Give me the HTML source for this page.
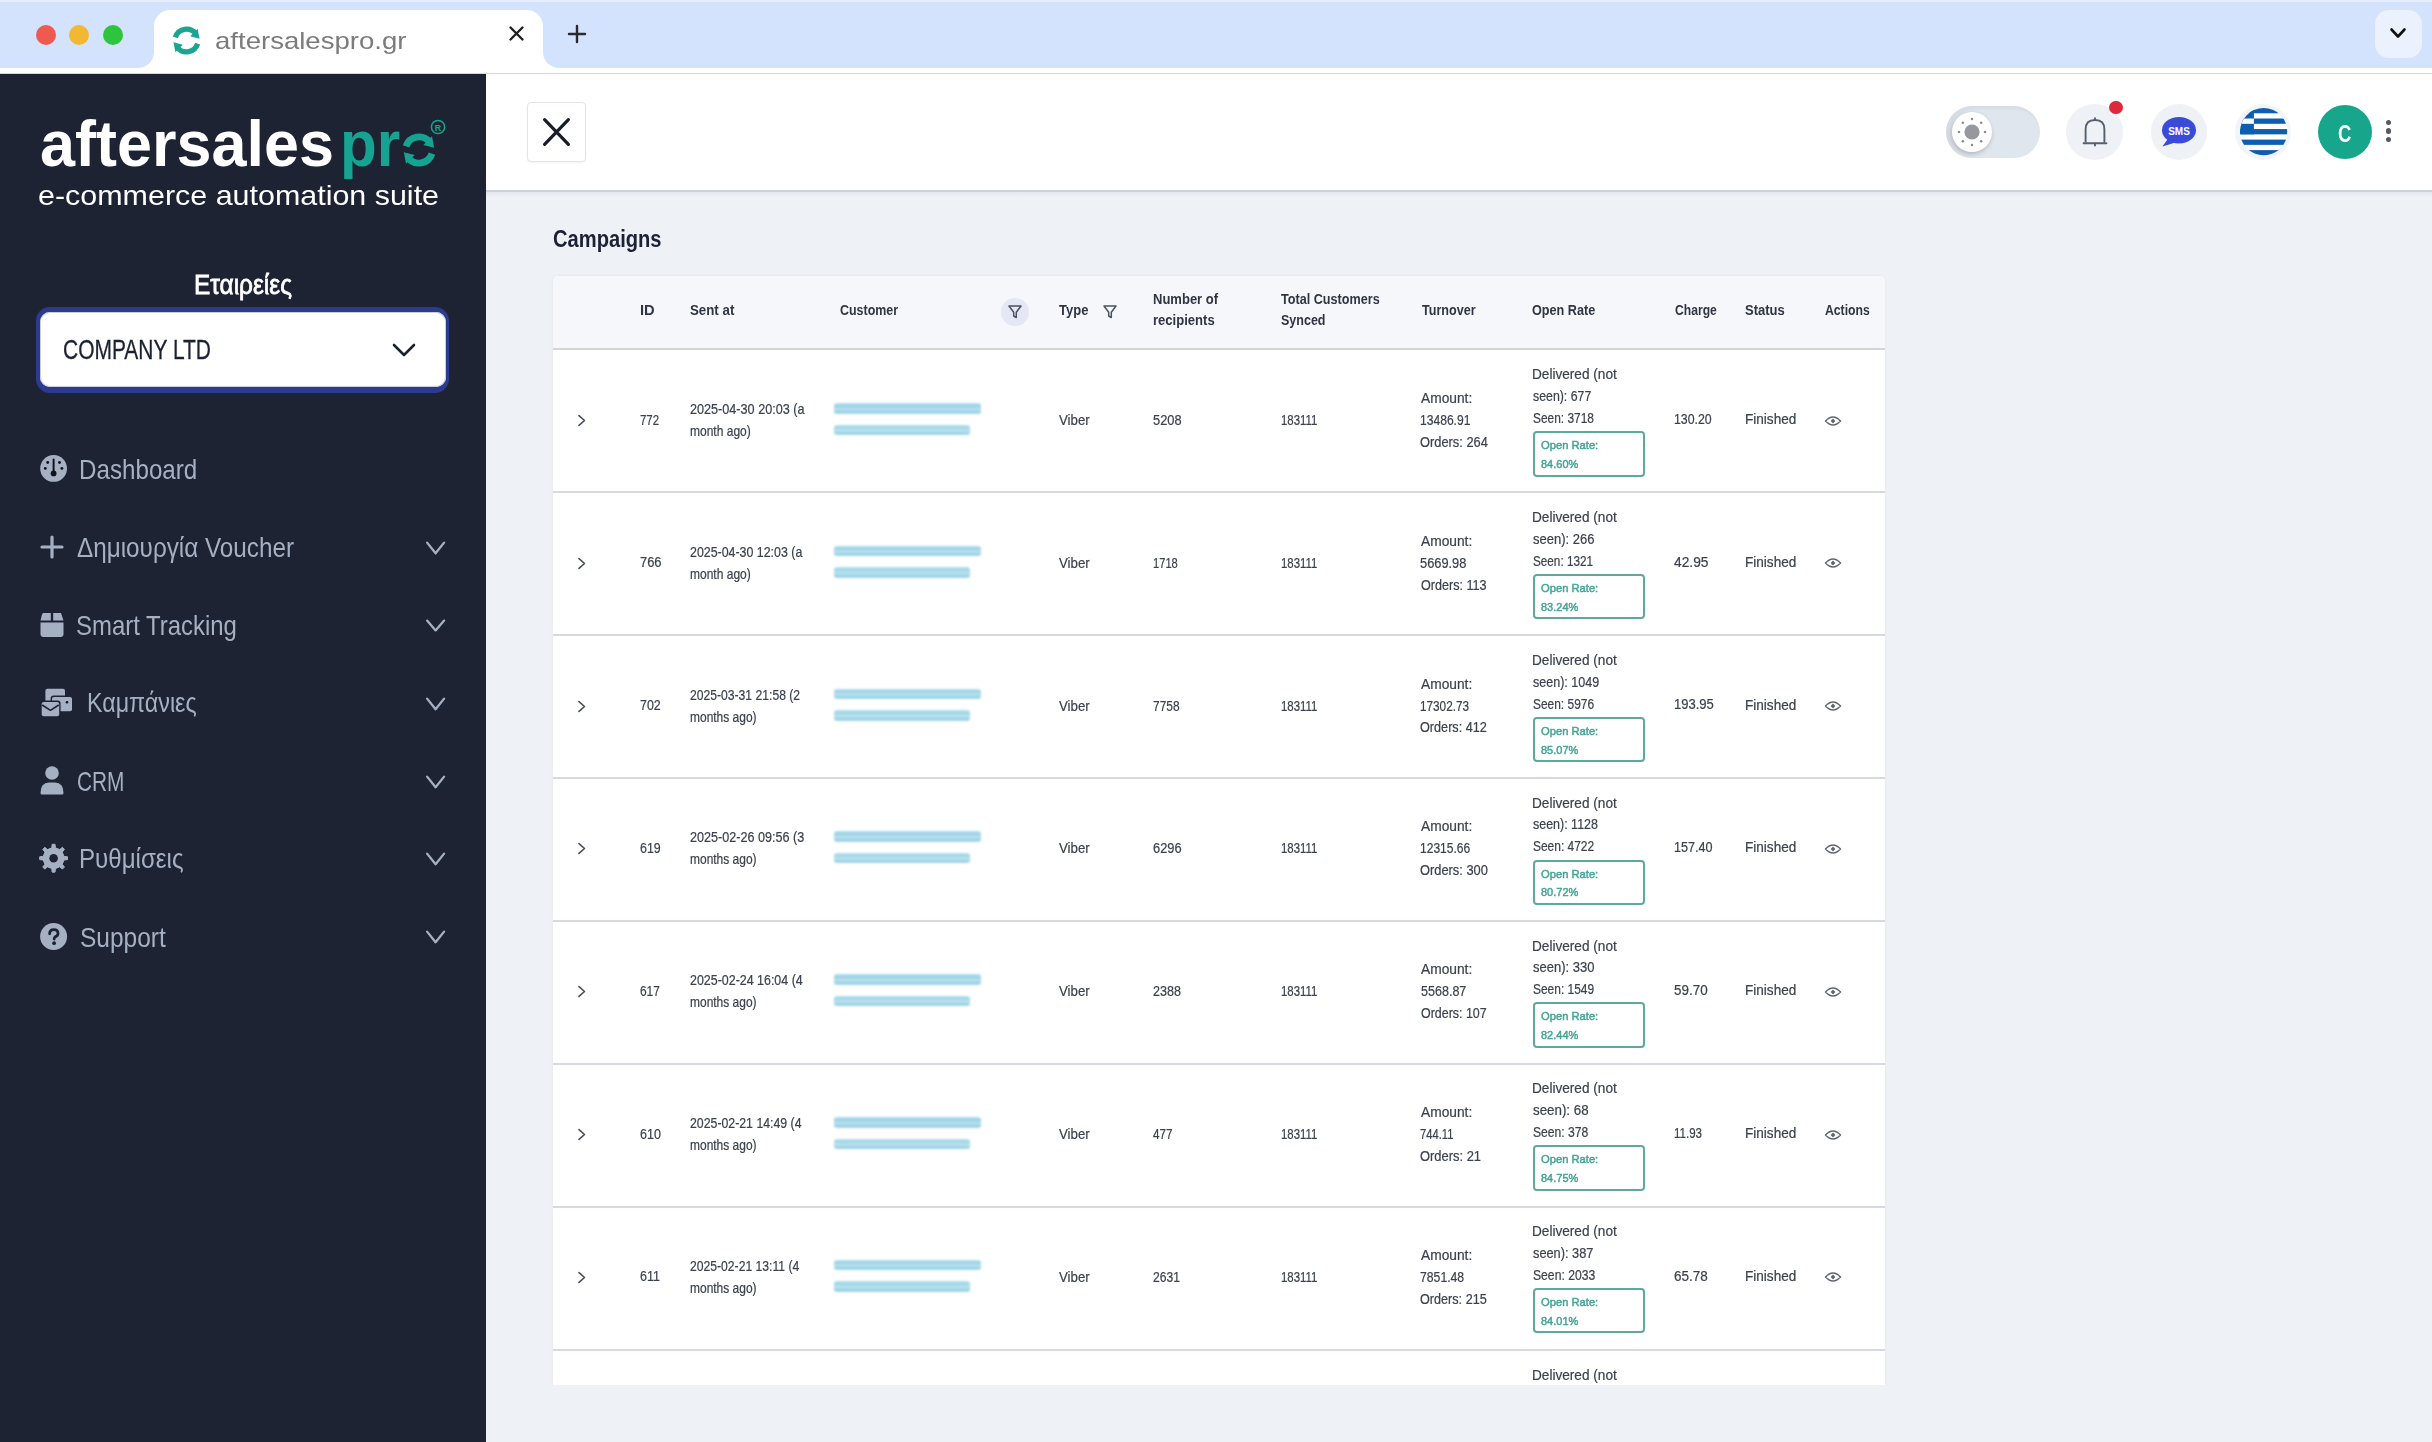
<!DOCTYPE html>
<html><head><meta charset="utf-8">
<style>
html,body{margin:0;padding:0;}
body{width:2432px;height:1442px;position:relative;overflow:hidden;background:#eef2f7;font-family:'Liberation Sans',sans-serif;}
.a{position:absolute;}
.t{position:absolute;white-space:pre;transform-origin:0 0;}
svg{position:absolute;overflow:visible;}
</style></head><body>
<div class=a style="left:0px;top:0px;width:2432px;height:68px;background:#d3e3fd;"></div>
<div class=a style="left:0px;top:0px;width:2432px;height:2px;background:#e6edfb;"></div>
<div class=a style="left:0px;top:68px;width:2432px;height:5px;background:#ffffff;"></div>
<div class=a style="left:0px;top:73px;width:2432px;height:1px;background:#d5d7db;"></div>
<div class=a style="left:35.5px;top:24.5px;width:20px;height:20px;border-radius:50%;background:#ee5a50;"></div>
<div class=a style="left:68.75px;top:24.5px;width:20px;height:20px;border-radius:50%;background:#f4b731;"></div>
<div class=a style="left:102.5px;top:24.5px;width:20px;height:20px;border-radius:50%;background:#2ec43e;"></div>
<div class=a style="left:154px;top:10px;width:389px;height:58px;background:#ffffff;border-radius:16px 16px 0 0;"></div>
<div class=a style="left:138px;top:52px;width:16px;height:16px;background:#ffffff;"></div>
<div class=a style="left:138px;top:52px;width:16px;height:16px;background:#d3e3fd;border-radius:0 0 16px 0;"></div>
<div class=a style="left:543px;top:52px;width:16px;height:16px;background:#ffffff;"></div>
<div class=a style="left:543px;top:52px;width:16px;height:16px;background:#d3e3fd;border-radius:0 0 0 16px;"></div>
<svg style="left:171px;top:25px" width="31" height="31" viewBox="0 0 100 100"><path d="M14 40 A38 38 0 0 1 80 28" fill="none" stroke="#1aa591" stroke-width="17.0"/><path d="M86 12 L92 44 L62 36 Z" fill="#1aa591"/><path d="M86 60 A38 38 0 0 1 20 72" fill="none" stroke="#1aa591" stroke-width="17.0"/><path d="M14 88 L8 56 L38 64 Z" fill="#1aa591"/></svg>
<svg style="left:509px;top:26px" width="15" height="15" viewBox="0 0 15 15"><path d="M1.5 1.5 L13.5 13.5 M13.5 1.5 L1.5 13.5" stroke="#1f1f1f" stroke-width="2.4" stroke-linecap="round"/></svg>
<svg style="left:568px;top:25px" width="18" height="18" viewBox="0 0 18 18"><path d="M9 1 V17 M1 9 H17" stroke="#2a2a2a" stroke-width="2.4" stroke-linecap="round"/></svg>
<div class=a style="left:2375px;top:9.5px;width:47px;height:48px;background:#ebf1fd;border-radius:14px;"></div>
<svg style="left:2390px;top:28px" width="16" height="11" viewBox="0 0 16 11"><path d="M1.5 1.5 L8 8.5 L14.5 1.5" fill="none" stroke="#111" stroke-width="2.6" stroke-linecap="round" stroke-linejoin="round"/></svg>
<div class=a style="left:0px;top:74px;width:486px;height:1368px;background:#1e2333;"></div>
<svg style="left:401px;top:132px" width="36" height="36" viewBox="0 0 100 100"><path d="M14 40 A38 38 0 0 1 80 28" fill="none" stroke="#16a391" stroke-width="19.0"/><path d="M86 12 L92 44 L62 36 Z" fill="#16a391"/><path d="M86 60 A38 38 0 0 1 20 72" fill="none" stroke="#16a391" stroke-width="19.0"/><path d="M14 88 L8 56 L38 64 Z" fill="#16a391"/></svg>
<svg style="left:430px;top:119px" width="16" height="16" viewBox="0 0 16 16"><circle cx="8" cy="8" r="6.6" fill="none" stroke="#16a391" stroke-width="1.5"/><text x="8" y="11.5" text-anchor="middle" font-size="9" font-family="Liberation Sans" font-weight="700" fill="#16a391">R</text></svg>
<div class=a style="left:35.5px;top:306.6px;width:413.8px;height:86.4px;background:#2d3b8f;border-radius:14px;"></div>
<div class=a style="left:40.4px;top:311.8px;width:405.2px;height:75.4px;background:#ffffff;border-radius:10px;box-shadow:inset 0 0 0 1px #c9cde0;"></div>
<svg style="left:392px;top:343px" width="24" height="14" viewBox="0 0 24 14"><path d="M2 2 L12 12 L22 2" fill="none" stroke="#1b2133" stroke-width="2.6" stroke-linecap="round" stroke-linejoin="round"/></svg>
<svg style="left:40px;top:455px" width="28" height="28" viewBox="0 0 28 28"><circle cx="13.6" cy="13.4" r="13.4" fill="#a6b0c3"/><circle cx="7.7" cy="7.5" r="1.45" fill="#10141f"/><circle cx="19.5" cy="7.5" r="1.45" fill="#10141f"/><circle cx="5.3" cy="13.4" r="1.45" fill="#10141f"/><circle cx="21.9" cy="13.4" r="1.45" fill="#10141f"/><path d="M13.6 4.6 V17" stroke="#10141f" stroke-width="2" stroke-linecap="round"/><circle cx="13.6" cy="18.4" r="2.9" fill="#10141f"/></svg>
<svg style="left:40px;top:535px" width="24" height="24" viewBox="0 0 24 24"><path d="M12 2 V22 M2 12 H22" stroke="#a6b0c3" stroke-width="3.2" stroke-linecap="round"/></svg>
<svg style="left:424px;top:539.8px" width="24" height="15.900000000000091" viewBox="0 0 24 15.900000000000091"><path d="M3.1 2.6 L11.6 13.300000000000091 L20.1 2.6" fill="none" stroke="#a6b0c3" stroke-width="2.3" stroke-linecap="round" stroke-linejoin="round"/></svg>
<svg style="left:40px;top:612px" width="24" height="26" viewBox="0 0 24 26"><path d="M3 1 H10.8 V8.5 H0.5 L2 2.5 Z M13.2 1 H21 L23.5 8.5 H13.2 Z" fill="#a6b0c3"/><path d="M0.5 10.5 H23.5 V22 Q23.5 25 20.5 25 H3.5 Q0.5 25 0.5 22 Z" fill="#a6b0c3"/></svg>
<svg style="left:424px;top:618px" width="24" height="15" viewBox="0 0 24 15"><path d="M3.1 2.6 L11.6 12.4 L20.1 2.6" fill="none" stroke="#a6b0c3" stroke-width="2.3" stroke-linecap="round" stroke-linejoin="round"/></svg>
<svg style="left:41px;top:688px" width="32" height="30" viewBox="0 0 32 30"><rect x="4.4" y="0.7" width="19.6" height="15" rx="2" fill="#a6b0c3"/><rect x="9.6" y="7.6" width="22.8" height="17" rx="3" fill="#1e2333"/><rect x="11" y="9" width="20" height="14.2" rx="2" fill="#a6b0c3"/><circle cx="26" cy="14.3" r="1.3" fill="#10141f"/><rect x="-0.7" y="12.6" width="20.3" height="17" rx="3" fill="#1e2333"/><rect x="0.7" y="14" width="17.5" height="14.2" rx="2" fill="#a6b0c3"/><path d="M1.2 17 L9.45 22.3 L17.7 17" fill="none" stroke="#1e2333" stroke-width="1.6" stroke-linejoin="round"/></svg>
<svg style="left:424px;top:695.7px" width="24" height="15.799999999999955" viewBox="0 0 24 15.799999999999955"><path d="M3.1 2.6 L11.6 13.199999999999955 L20.1 2.6" fill="none" stroke="#a6b0c3" stroke-width="2.3" stroke-linecap="round" stroke-linejoin="round"/></svg>
<svg style="left:40px;top:766px" width="24" height="29" viewBox="0 0 24 29"><circle cx="12" cy="7" r="6.8" fill="#a6b0c3"/><path d="M0.5 27 Q0.5 16.5 9 16.5 H15 Q23.5 16.5 23.5 27 Q23.5 28.5 22 28.5 H2 Q0.5 28.5 0.5 27 Z" fill="#a6b0c3"/></svg>
<svg style="left:424px;top:773.6px" width="24" height="15.799999999999955" viewBox="0 0 24 15.799999999999955"><path d="M3.1 2.6 L11.6 13.199999999999955 L20.1 2.6" fill="none" stroke="#a6b0c3" stroke-width="2.3" stroke-linecap="round" stroke-linejoin="round"/></svg>
<svg style="left:40px;top:844px" width="28" height="29" viewBox="0 0 28 29"><path d="M23.94 12.39 L27.53 12.77 L27.53 15.63 L23.94 16.01 L22.19 20.24 L24.46 23.04 L22.44 25.06 L19.64 22.79 L15.41 24.54 L15.03 28.13 L12.17 28.13 L11.79 24.54 L7.56 22.79 L4.76 25.06 L2.74 23.04 L5.01 20.24 L3.26 16.01 L-0.33 15.63 L-0.33 12.77 L3.26 12.39 L5.01 8.16 L2.74 5.36 L4.76 3.34 L7.56 5.61 L11.79 3.86 L12.17 0.27 L15.03 0.27 L15.41 3.86 L19.64 5.61 L22.44 3.34 L24.46 5.36 L22.19 8.16 Z" fill="#a6b0c3" stroke="#a6b0c3" stroke-width="1" stroke-linejoin="round"/><circle cx="13.6" cy="14.2" r="10.5" fill="#a6b0c3"/><circle cx="13.6" cy="14.2" r="4.3" fill="#1e2333"/></svg>
<svg style="left:424px;top:851.4px" width="24" height="15.800000000000068" viewBox="0 0 24 15.800000000000068"><path d="M3.1 2.6 L11.6 13.200000000000069 L20.1 2.6" fill="none" stroke="#a6b0c3" stroke-width="2.3" stroke-linecap="round" stroke-linejoin="round"/></svg>
<svg style="left:40px;top:923px" width="28" height="28" viewBox="0 0 28 28"><circle cx="13.6" cy="13.5" r="13.5" fill="#a6b0c3"/><path d="M9.6 10.8 Q9.6 6.6 13.8 6.6 Q18 6.6 18 10.4 Q18 12.6 15.6 13.6 Q14.2 14.3 14.2 16" fill="none" stroke="#1e2333" stroke-width="2.8" stroke-linecap="round"/><circle cx="14.1" cy="20.2" r="1.9" fill="#1e2333"/></svg>
<svg style="left:424px;top:929.2px" width="24" height="15.799999999999955" viewBox="0 0 24 15.799999999999955"><path d="M3.1 2.6 L11.6 13.199999999999955 L20.1 2.6" fill="none" stroke="#a6b0c3" stroke-width="2.3" stroke-linecap="round" stroke-linejoin="round"/></svg>
<div class=a style="left:486px;top:192px;width:1946px;height:5px;background:linear-gradient(to bottom,#e3e7ee,#eef2f7);"></div>
<div class=a style="left:486px;top:74px;width:1946px;height:116px;background:#ffffff;"></div>
<div class=a style="left:486px;top:190px;width:1946px;height:2px;background:#ccd1da;"></div>
<div class=a style="left:527px;top:102px;width:59px;height:60px;background:#ffffff;box-sizing:border-box;border:1px solid #e2e5ea;border-radius:4px;box-shadow:0 1px 2px rgba(0,0,0,0.05);"></div>
<svg style="left:541px;top:116px" width="31" height="32" viewBox="0 0 31 32"><path d="M3.6 3.6 L27.4 28.4 M27.4 3.6 L3.6 28.4" stroke="#171c2b" stroke-width="3.2" stroke-linecap="round"/></svg>
<div class=a style="left:1946px;top:106px;width:94px;height:51.5px;background:#e0e6ee;border-radius:26px;box-shadow:inset 2px 2px 4px rgba(0,0,0,0.06);"></div>
<div class=a style="left:1952px;top:112px;width:40px;height:40px;border-radius:50%;background:#ffffff;box-shadow:-1px 2px 5px rgba(0,0,0,0.22);"></div>
<svg style="left:1958px;top:118px" width="28" height="28" viewBox="0 0 28 28"><circle cx="14" cy="14" r="7.6" fill="#97989d"/><circle cx="27.00" cy="14.00" r="1.25" fill="#8a8b90"/><circle cx="23.19" cy="23.19" r="1.25" fill="#8a8b90"/><circle cx="14.00" cy="27.00" r="1.25" fill="#8a8b90"/><circle cx="4.81" cy="23.19" r="1.25" fill="#8a8b90"/><circle cx="1.00" cy="14.00" r="1.25" fill="#8a8b90"/><circle cx="4.81" cy="4.81" r="1.25" fill="#8a8b90"/><circle cx="14.00" cy="1.00" r="1.25" fill="#8a8b90"/><circle cx="23.19" cy="4.81" r="1.25" fill="#8a8b90"/></svg>
<div class=a style="left:2066.2999999999997px;top:103.6px;width:56.8px;height:56.8px;border-radius:50%;background:#eef1f6;"></div>
<svg style="left:2081px;top:115px" width="28" height="34" viewBox="0 0 28 34"><path d="M4.6 27.6 V14.5 Q4.6 5 14 5 Q23.4 5 23.4 14.5 V27.6" fill="none" stroke="#56606c" stroke-width="1.9" stroke-linejoin="round"/><path d="M2.6 28.3 H25.4" stroke="#56606c" stroke-width="2" stroke-linecap="round"/><path d="M14 3.2 V5 M14 28.5 V30.6" stroke="#56606c" stroke-width="1.9" stroke-linecap="round"/></svg>
<div class=a style="left:2109.4px;top:101.0px;width:13.2px;height:13.2px;border-radius:50%;background:#e0283c;"></div>
<div class=a style="left:2150.6px;top:103.6px;width:56.8px;height:56.8px;border-radius:50%;background:#eef1f6;"></div>
<svg style="left:2160px;top:115px" width="38" height="34" viewBox="0 0 38 34"><ellipse cx="19" cy="15.2" rx="17" ry="13.2" fill="#3a4bd9"/><path d="M8.5 23 L2.4 31.6 L17 27 Z" fill="#3a4bd9"/><text x="8.2" y="20.1" textLength="21.6" lengthAdjust="spacingAndGlyphs" font-family="Liberation Sans" font-weight="700" font-size="11.2" fill="#ffffff">SMS</text></svg>
<div class=a style="left:2234.8px;top:103.8px;width:56.4px;height:56.4px;border-radius:50%;background:#f1f4f9;"></div>
<svg style="left:2239.5px;top:108.10000000000001px" width="47.4" height="47.4" viewBox="0 0 47.4 47.4"><defs><clipPath id="fc"><circle cx="23.7" cy="23.7" r="23.7"/></clipPath></defs><g clip-path="url(#fc)"><rect x="0" y="0" width="47.4" height="47.4" fill="#ffffff"/><rect x="0" y="0.00" width="47.4" height="5.27" fill="#0d5eaf"/><rect x="0" y="10.53" width="47.4" height="5.27" fill="#0d5eaf"/><rect x="0" y="21.07" width="47.4" height="5.27" fill="#0d5eaf"/><rect x="0" y="31.60" width="47.4" height="5.27" fill="#0d5eaf"/><rect x="0" y="42.13" width="47.4" height="5.27" fill="#0d5eaf"/><rect x="0" y="0" width="13.9" height="26.33" fill="#0d5eaf"/><rect x="0" y="10.53" width="13.9" height="5.27" fill="#fff"/></g></svg>
<div class=a style="left:2317.5px;top:104.7px;width:54.6px;height:54.6px;border-radius:50%;background:#17a58c;"></div>
<div class=a style="left:2385.5px;top:119.6px;width:5.8px;height:5.8px;border-radius:50%;background:#535a66;"></div>
<div class=a style="left:2385.5px;top:128.4px;width:5.8px;height:5.8px;border-radius:50%;background:#535a66;"></div>
<div class=a style="left:2385.5px;top:136.7px;width:5.8px;height:5.8px;border-radius:50%;background:#535a66;"></div>
<div class=a style="left:553px;top:276px;width:1332px;height:1109px;background:#ffffff;border-radius:5px 5px 0 0;box-shadow:0 0 3px rgba(40,50,70,0.07);"></div>
<div class=a style="left:553px;top:276px;width:1332px;height:72px;background:#f5f7fa;border-radius:5px 5px 0 0;"></div>
<div class=a style="left:553px;top:348px;width:1332px;height:2px;background:#d0d4db;"></div>
<div class=a style="left:1001px;top:298px;width:28px;height:28px;border-radius:50%;background:#e4e7f4;"></div>
<svg style="left:1008px;top:305px" width="14" height="14" viewBox="0 0 14 14"><path d="M1 1 H13 L8.3 7.2 V12.5 L5.7 11 V7.2 Z" fill="none" stroke="#4b5263" stroke-width="1.5" stroke-linejoin="round"/></svg>
<svg style="left:1102.5px;top:305px" width="14" height="14" viewBox="0 0 14 14"><path d="M1 1 H13 L8.3 7.2 V12.5 L5.7 11 V7.2 Z" fill="none" stroke="#4b5263" stroke-width="1.5" stroke-linejoin="round"/></svg>
<svg style="left:576px;top:413.0px" width="11" height="15" viewBox="0 0 11 15"><path d="M3 2.6 L8.5 7.5 L3 12.4" fill="none" stroke="#474d5a" stroke-width="1.6" stroke-linecap="round" stroke-linejoin="round"/></svg>
<div class=a style="left:834px;top:403.0px;width:147px;height:10.5px;background:linear-gradient(to bottom,#b4dfee 0,#9ad2e5 30%,#bde3ef 55%,#94cfe3 85%,#b2dcea 100%);border-radius:3px;filter:blur(1.1px);"></div>
<div class=a style="left:834px;top:424.5px;width:136px;height:10.5px;background:linear-gradient(to bottom,#b6e0ee 0,#a0d5e7 30%,#bfe4f0 55%,#94cfe3 85%,#b2dcea 100%);border-radius:3px;filter:blur(1.1px);"></div>
<div class=a style="left:1532.5px;top:431.1px;width:112.5px;height:45.6px;box-sizing:border-box;border:2px solid #5daa9b;border-radius:4px;"></div>
<svg style="left:1824px;top:413.5px" width="18" height="14" viewBox="0 0 18 14"><path d="M1.5 7 Q9 -1 16.5 7 Q9 15 1.5 7 Z" fill="none" stroke="#62666f" stroke-width="1.5" stroke-linejoin="round"/><path d="M9 4.6 L11.4 7 L9 9.4 L6.6 7 Z" fill="#62666f"/></svg>
<div class=a style="left:553px;top:491.0px;width:1332px;height:2px;background:#d6d9df;"></div>
<svg style="left:576px;top:555.8px" width="11" height="15" viewBox="0 0 11 15"><path d="M3 2.6 L8.5 7.5 L3 12.4" fill="none" stroke="#474d5a" stroke-width="1.6" stroke-linecap="round" stroke-linejoin="round"/></svg>
<div class=a style="left:834px;top:545.8px;width:147px;height:10.5px;background:linear-gradient(to bottom,#b4dfee 0,#9ad2e5 30%,#bde3ef 55%,#94cfe3 85%,#b2dcea 100%);border-radius:3px;filter:blur(1.1px);"></div>
<div class=a style="left:834px;top:567.3px;width:136px;height:10.5px;background:linear-gradient(to bottom,#b6e0ee 0,#a0d5e7 30%,#bfe4f0 55%,#94cfe3 85%,#b2dcea 100%);border-radius:3px;filter:blur(1.1px);"></div>
<div class=a style="left:1532.5px;top:573.9000000000001px;width:112.5px;height:45.6px;box-sizing:border-box;border:2px solid #5daa9b;border-radius:4px;"></div>
<svg style="left:1824px;top:556.3px" width="18" height="14" viewBox="0 0 18 14"><path d="M1.5 7 Q9 -1 16.5 7 Q9 15 1.5 7 Z" fill="none" stroke="#62666f" stroke-width="1.5" stroke-linejoin="round"/><path d="M9 4.6 L11.4 7 L9 9.4 L6.6 7 Z" fill="#62666f"/></svg>
<div class=a style="left:553px;top:634.0px;width:1332px;height:2px;background:#d6d9df;"></div>
<svg style="left:576px;top:698.6px" width="11" height="15" viewBox="0 0 11 15"><path d="M3 2.6 L8.5 7.5 L3 12.4" fill="none" stroke="#474d5a" stroke-width="1.6" stroke-linecap="round" stroke-linejoin="round"/></svg>
<div class=a style="left:834px;top:688.6px;width:147px;height:10.5px;background:linear-gradient(to bottom,#b4dfee 0,#9ad2e5 30%,#bde3ef 55%,#94cfe3 85%,#b2dcea 100%);border-radius:3px;filter:blur(1.1px);"></div>
<div class=a style="left:834px;top:710.1px;width:136px;height:10.5px;background:linear-gradient(to bottom,#b6e0ee 0,#a0d5e7 30%,#bfe4f0 55%,#94cfe3 85%,#b2dcea 100%);border-radius:3px;filter:blur(1.1px);"></div>
<div class=a style="left:1532.5px;top:716.7px;width:112.5px;height:45.6px;box-sizing:border-box;border:2px solid #5daa9b;border-radius:4px;"></div>
<svg style="left:1824px;top:699.1px" width="18" height="14" viewBox="0 0 18 14"><path d="M1.5 7 Q9 -1 16.5 7 Q9 15 1.5 7 Z" fill="none" stroke="#62666f" stroke-width="1.5" stroke-linejoin="round"/><path d="M9 4.6 L11.4 7 L9 9.4 L6.6 7 Z" fill="#62666f"/></svg>
<div class=a style="left:553px;top:777.0px;width:1332px;height:2px;background:#d6d9df;"></div>
<svg style="left:576px;top:841.4000000000001px" width="11" height="15" viewBox="0 0 11 15"><path d="M3 2.6 L8.5 7.5 L3 12.4" fill="none" stroke="#474d5a" stroke-width="1.6" stroke-linecap="round" stroke-linejoin="round"/></svg>
<div class=a style="left:834px;top:831.4000000000001px;width:147px;height:10.5px;background:linear-gradient(to bottom,#b4dfee 0,#9ad2e5 30%,#bde3ef 55%,#94cfe3 85%,#b2dcea 100%);border-radius:3px;filter:blur(1.1px);"></div>
<div class=a style="left:834px;top:852.9000000000001px;width:136px;height:10.5px;background:linear-gradient(to bottom,#b6e0ee 0,#a0d5e7 30%,#bfe4f0 55%,#94cfe3 85%,#b2dcea 100%);border-radius:3px;filter:blur(1.1px);"></div>
<div class=a style="left:1532.5px;top:859.5px;width:112.5px;height:45.6px;box-sizing:border-box;border:2px solid #5daa9b;border-radius:4px;"></div>
<svg style="left:1824px;top:841.9000000000001px" width="18" height="14" viewBox="0 0 18 14"><path d="M1.5 7 Q9 -1 16.5 7 Q9 15 1.5 7 Z" fill="none" stroke="#62666f" stroke-width="1.5" stroke-linejoin="round"/><path d="M9 4.6 L11.4 7 L9 9.4 L6.6 7 Z" fill="#62666f"/></svg>
<div class=a style="left:553px;top:920.0px;width:1332px;height:2px;background:#d6d9df;"></div>
<svg style="left:576px;top:984.2px" width="11" height="15" viewBox="0 0 11 15"><path d="M3 2.6 L8.5 7.5 L3 12.4" fill="none" stroke="#474d5a" stroke-width="1.6" stroke-linecap="round" stroke-linejoin="round"/></svg>
<div class=a style="left:834px;top:974.2px;width:147px;height:10.5px;background:linear-gradient(to bottom,#b4dfee 0,#9ad2e5 30%,#bde3ef 55%,#94cfe3 85%,#b2dcea 100%);border-radius:3px;filter:blur(1.1px);"></div>
<div class=a style="left:834px;top:995.7px;width:136px;height:10.5px;background:linear-gradient(to bottom,#b6e0ee 0,#a0d5e7 30%,#bfe4f0 55%,#94cfe3 85%,#b2dcea 100%);border-radius:3px;filter:blur(1.1px);"></div>
<div class=a style="left:1532.5px;top:1002.3000000000001px;width:112.5px;height:45.6px;box-sizing:border-box;border:2px solid #5daa9b;border-radius:4px;"></div>
<svg style="left:1824px;top:984.7px" width="18" height="14" viewBox="0 0 18 14"><path d="M1.5 7 Q9 -1 16.5 7 Q9 15 1.5 7 Z" fill="none" stroke="#62666f" stroke-width="1.5" stroke-linejoin="round"/><path d="M9 4.6 L11.4 7 L9 9.4 L6.6 7 Z" fill="#62666f"/></svg>
<div class=a style="left:553px;top:1063.0px;width:1332px;height:2px;background:#d6d9df;"></div>
<svg style="left:576px;top:1127.0px" width="11" height="15" viewBox="0 0 11 15"><path d="M3 2.6 L8.5 7.5 L3 12.4" fill="none" stroke="#474d5a" stroke-width="1.6" stroke-linecap="round" stroke-linejoin="round"/></svg>
<div class=a style="left:834px;top:1117.0px;width:147px;height:10.5px;background:linear-gradient(to bottom,#b4dfee 0,#9ad2e5 30%,#bde3ef 55%,#94cfe3 85%,#b2dcea 100%);border-radius:3px;filter:blur(1.1px);"></div>
<div class=a style="left:834px;top:1138.5px;width:136px;height:10.5px;background:linear-gradient(to bottom,#b6e0ee 0,#a0d5e7 30%,#bfe4f0 55%,#94cfe3 85%,#b2dcea 100%);border-radius:3px;filter:blur(1.1px);"></div>
<div class=a style="left:1532.5px;top:1145.1px;width:112.5px;height:45.6px;box-sizing:border-box;border:2px solid #5daa9b;border-radius:4px;"></div>
<svg style="left:1824px;top:1127.5px" width="18" height="14" viewBox="0 0 18 14"><path d="M1.5 7 Q9 -1 16.5 7 Q9 15 1.5 7 Z" fill="none" stroke="#62666f" stroke-width="1.5" stroke-linejoin="round"/><path d="M9 4.6 L11.4 7 L9 9.4 L6.6 7 Z" fill="#62666f"/></svg>
<div class=a style="left:553px;top:1206.0px;width:1332px;height:2px;background:#d6d9df;"></div>
<svg style="left:576px;top:1269.8000000000002px" width="11" height="15" viewBox="0 0 11 15"><path d="M3 2.6 L8.5 7.5 L3 12.4" fill="none" stroke="#474d5a" stroke-width="1.6" stroke-linecap="round" stroke-linejoin="round"/></svg>
<div class=a style="left:834px;top:1259.8000000000002px;width:147px;height:10.5px;background:linear-gradient(to bottom,#b4dfee 0,#9ad2e5 30%,#bde3ef 55%,#94cfe3 85%,#b2dcea 100%);border-radius:3px;filter:blur(1.1px);"></div>
<div class=a style="left:834px;top:1281.3000000000002px;width:136px;height:10.5px;background:linear-gradient(to bottom,#b6e0ee 0,#a0d5e7 30%,#bfe4f0 55%,#94cfe3 85%,#b2dcea 100%);border-radius:3px;filter:blur(1.1px);"></div>
<div class=a style="left:1532.5px;top:1287.9px;width:112.5px;height:45.6px;box-sizing:border-box;border:2px solid #5daa9b;border-radius:4px;"></div>
<svg style="left:1824px;top:1270.3000000000002px" width="18" height="14" viewBox="0 0 18 14"><path d="M1.5 7 Q9 -1 16.5 7 Q9 15 1.5 7 Z" fill="none" stroke="#62666f" stroke-width="1.5" stroke-linejoin="round"/><path d="M9 4.6 L11.4 7 L9 9.4 L6.6 7 Z" fill="#62666f"/></svg>
<div class=a style="left:553px;top:1349.0px;width:1332px;height:2px;background:#d6d9df;"></div>
<div class=a style="left:553px;top:1385px;width:1333px;height:57px;background:#eef2f7;"></div>
<div class=t style="left:214.90px;top:27.03px;font-size:24px;line-height:27.576px;color:#7b7b7b;font-weight:400;transform:scaleX(1.1482);">aftersalespro.gr</div>
<div class=t style="left:40.24px;top:108.08px;font-size:64px;line-height:73.536px;color:#ffffff;font-weight:700;transform:scaleX(0.9838);">aftersales</div>
<div class=t style="left:340.39px;top:108.08px;font-size:64px;line-height:73.536px;color:#16a391;font-weight:700;transform:scaleX(0.9400);">pr</div>
<div class=t style="left:38.48px;top:180.46px;font-size:28px;line-height:32.172px;color:#ffffff;font-weight:400;transform:scaleX(1.0873);">e-commerce automation suite</div>
<div class=t style="left:194.05px;top:268.66px;font-size:28px;line-height:32.172px;color:#ffffff;font-weight:400;transform:scaleX(0.8712);-webkit-text-stroke:0.8px #ffffff;">Εταιρείες</div>
<div class=t style="left:62.55px;top:333.66px;font-size:28px;line-height:32.172px;color:#1b2133;font-weight:400;transform:scaleX(0.7488);-webkit-text-stroke:0.3px #1b2133;">COMPANY LTD</div>
<div class=t style="left:79.07px;top:454.16px;font-size:28px;line-height:32.172px;color:#a6b0c3;font-weight:400;transform:scaleX(0.8636);">Dashboard</div>
<div class=t style="left:76.51px;top:532.16px;font-size:28px;line-height:32.172px;color:#a6b0c3;font-weight:400;transform:scaleX(0.8671);">Δημιουργία Voucher</div>
<div class=t style="left:76.04px;top:609.66px;font-size:28px;line-height:32.172px;color:#a6b0c3;font-weight:400;transform:scaleX(0.8544);">Smart Tracking</div>
<div class=t style="left:86.54px;top:687.06px;font-size:28px;line-height:32.172px;color:#a6b0c3;font-weight:400;transform:scaleX(0.8311);">Καμπάνιες</div>
<div class=t style="left:76.76px;top:765.66px;font-size:28px;line-height:32.172px;color:#a6b0c3;font-weight:400;transform:scaleX(0.7427);">CRM</div>
<div class=t style="left:79.47px;top:843.36px;font-size:28px;line-height:32.172px;color:#a6b0c3;font-weight:400;transform:scaleX(0.8613);">Ρυθμίσεις</div>
<div class=t style="left:80.42px;top:922.36px;font-size:28px;line-height:32.172px;color:#a6b0c3;font-weight:400;transform:scaleX(0.8752);">Support</div>
<div class=t style="left:2337.96px;top:121.38px;font-size:23px;line-height:26.427px;color:#ffffff;font-weight:700;transform:scaleX(0.8037);">C</div>
<div class=t style="left:553.19px;top:224.88px;font-size:24px;line-height:27.576px;color:#1b2235;font-weight:700;transform:scaleX(0.8390);">Campaigns</div>
<div class=t style="left:639.52px;top:301.12px;font-size:15px;line-height:17.235px;color:#2f3543;font-weight:700;transform:scaleX(0.9767);">ID</div>
<div class=t style="left:689.73px;top:301.12px;font-size:15px;line-height:17.235px;color:#2f3543;font-weight:700;transform:scaleX(0.8859);">Sent at</div>
<div class=t style="left:840.00px;top:301.12px;font-size:15px;line-height:17.235px;color:#2f3543;font-weight:700;transform:scaleX(0.8300);">Customer</div>
<div class=t style="left:1058.57px;top:301.12px;font-size:15px;line-height:17.235px;color:#2f3543;font-weight:700;transform:scaleX(0.8665);">Type</div>
<div class=t style="left:1152.82px;top:290.12px;font-size:15px;line-height:17.235px;color:#2f3543;font-weight:700;transform:scaleX(0.8679);">Number of</div>
<div class=t style="left:1152.82px;top:311.43px;font-size:15px;line-height:17.235px;color:#2f3543;font-weight:700;transform:scaleX(0.8701);">recipients</div>
<div class=t style="left:1281.37px;top:290.12px;font-size:15px;line-height:17.235px;color:#2f3543;font-weight:700;transform:scaleX(0.8417);">Total Customers</div>
<div class=t style="left:1281.25px;top:311.43px;font-size:15px;line-height:17.235px;color:#2f3543;font-weight:700;transform:scaleX(0.8342);">Synced</div>
<div class=t style="left:1421.57px;top:301.12px;font-size:15px;line-height:17.235px;color:#2f3543;font-weight:700;transform:scaleX(0.8379);">Turnover</div>
<div class=t style="left:1532.09px;top:301.12px;font-size:15px;line-height:17.235px;color:#2f3543;font-weight:700;transform:scaleX(0.8430);">Open Rate</div>
<div class=t style="left:1674.51px;top:301.12px;font-size:15px;line-height:17.235px;color:#2f3543;font-weight:700;transform:scaleX(0.8089);">Charge</div>
<div class=t style="left:1745.24px;top:301.12px;font-size:15px;line-height:17.235px;color:#2f3543;font-weight:700;transform:scaleX(0.8667);">Status</div>
<div class=t style="left:1825.26px;top:301.12px;font-size:15px;line-height:17.235px;color:#2f3543;font-weight:700;transform:scaleX(0.8142);">Actions</div>
<div class=t style="left:640.43px;top:410.62px;font-size:15px;line-height:17.235px;color:#3b414e;font-weight:400;transform:scaleX(0.7632);-webkit-text-stroke:0.22px currentColor;">772</div>
<div class=t style="left:689.97px;top:399.93px;font-size:15px;line-height:17.235px;color:#3b414e;font-weight:400;transform:scaleX(0.8422);-webkit-text-stroke:0.22px currentColor;">2025-04-30 20:03 (a</div>
<div class=t style="left:689.88px;top:421.93px;font-size:15px;line-height:17.235px;color:#3b414e;font-weight:400;transform:scaleX(0.8007);-webkit-text-stroke:0.22px currentColor;">month ago)</div>
<div class=t style="left:1058.70px;top:410.93px;font-size:15px;line-height:17.235px;color:#3b414e;font-weight:400;transform:scaleX(0.8856);-webkit-text-stroke:0.22px currentColor;">Viber</div>
<div class=t style="left:1152.89px;top:410.93px;font-size:15px;line-height:17.235px;color:#3b414e;font-weight:400;transform:scaleX(0.8564);-webkit-text-stroke:0.22px currentColor;">5208</div>
<div class=t style="left:1281.20px;top:410.93px;font-size:15px;line-height:17.235px;color:#3b414e;font-weight:400;transform:scaleX(0.7595);-webkit-text-stroke:0.22px currentColor;">183111</div>
<div class=t style="left:1421.00px;top:388.93px;font-size:15px;line-height:17.235px;color:#3b414e;font-weight:400;transform:scaleX(0.9167);-webkit-text-stroke:0.22px currentColor;">Amount:</div>
<div class=t style="left:1420.15px;top:410.93px;font-size:15px;line-height:17.235px;color:#3b414e;font-weight:400;transform:scaleX(0.8056);-webkit-text-stroke:0.22px currentColor;">13486.91</div>
<div class=t style="left:1420.49px;top:432.73px;font-size:15px;line-height:17.235px;color:#3b414e;font-weight:400;transform:scaleX(0.8566);-webkit-text-stroke:0.22px currentColor;">Orders: 264</div>
<div class=t style="left:1532.21px;top:365.32px;font-size:15px;line-height:17.235px;color:#3b414e;font-weight:400;transform:scaleX(0.9077);-webkit-text-stroke:0.22px currentColor;">Delivered (not</div>
<div class=t style="left:1533.05px;top:386.93px;font-size:15px;line-height:17.235px;color:#3b414e;font-weight:400;transform:scaleX(0.8227);-webkit-text-stroke:0.22px currentColor;">seen): 677</div>
<div class=t style="left:1532.82px;top:408.93px;font-size:15px;line-height:17.235px;color:#3b414e;font-weight:400;transform:scaleX(0.7937);-webkit-text-stroke:0.22px currentColor;">Seen: 3718</div>
<div class=t style="left:1541.45px;top:439.12px;font-size:11.8px;line-height:13.558px;color:#45a595;font-weight:400;transform:scaleX(0.9483);-webkit-text-stroke:0.5px #45a595;">Open Rate:</div>
<div class=t style="left:1541.46px;top:458.02px;font-size:11.8px;line-height:13.558px;color:#45a595;font-weight:400;transform:scaleX(0.9310);-webkit-text-stroke:0.5px #45a595;">84.60%</div>
<div class=t style="left:1673.74px;top:409.73px;font-size:15px;line-height:17.235px;color:#3b414e;font-weight:400;transform:scaleX(0.8219);-webkit-text-stroke:0.22px currentColor;">130.20</div>
<div class=t style="left:1744.52px;top:409.93px;font-size:15px;line-height:17.235px;color:#3b414e;font-weight:400;transform:scaleX(0.9039);-webkit-text-stroke:0.22px currentColor;">Finished</div>
<div class=t style="left:640.36px;top:553.42px;font-size:15px;line-height:17.235px;color:#3b414e;font-weight:400;transform:scaleX(0.8595);-webkit-text-stroke:0.22px currentColor;">766</div>
<div class=t style="left:689.98px;top:542.72px;font-size:15px;line-height:17.235px;color:#3b414e;font-weight:400;transform:scaleX(0.8259);-webkit-text-stroke:0.22px currentColor;">2025-04-30 12:03 (a</div>
<div class=t style="left:689.88px;top:564.72px;font-size:15px;line-height:17.235px;color:#3b414e;font-weight:400;transform:scaleX(0.8007);-webkit-text-stroke:0.22px currentColor;">month ago)</div>
<div class=t style="left:1058.70px;top:553.72px;font-size:15px;line-height:17.235px;color:#3b414e;font-weight:400;transform:scaleX(0.8856);-webkit-text-stroke:0.22px currentColor;">Viber</div>
<div class=t style="left:1152.62px;top:553.72px;font-size:15px;line-height:17.235px;color:#3b414e;font-weight:400;transform:scaleX(0.7427);-webkit-text-stroke:0.22px currentColor;">1718</div>
<div class=t style="left:1281.20px;top:553.72px;font-size:15px;line-height:17.235px;color:#3b414e;font-weight:400;transform:scaleX(0.7595);-webkit-text-stroke:0.22px currentColor;">183111</div>
<div class=t style="left:1421.00px;top:531.72px;font-size:15px;line-height:17.235px;color:#3b414e;font-weight:400;transform:scaleX(0.9167);-webkit-text-stroke:0.22px currentColor;">Amount:</div>
<div class=t style="left:1420.49px;top:553.72px;font-size:15px;line-height:17.235px;color:#3b414e;font-weight:400;transform:scaleX(0.8552);-webkit-text-stroke:0.22px currentColor;">5669.98</div>
<div class=t style="left:1420.50px;top:575.52px;font-size:15px;line-height:17.235px;color:#3b414e;font-weight:400;transform:scaleX(0.8396);-webkit-text-stroke:0.22px currentColor;">Orders: 113</div>
<div class=t style="left:1532.21px;top:508.13px;font-size:15px;line-height:17.235px;color:#3b414e;font-weight:400;transform:scaleX(0.9077);-webkit-text-stroke:0.22px currentColor;">Delivered (not</div>
<div class=t style="left:1533.04px;top:529.72px;font-size:15px;line-height:17.235px;color:#3b414e;font-weight:400;transform:scaleX(0.8665);-webkit-text-stroke:0.22px currentColor;">seen): 266</div>
<div class=t style="left:1532.83px;top:551.72px;font-size:15px;line-height:17.235px;color:#3b414e;font-weight:400;transform:scaleX(0.7819);-webkit-text-stroke:0.22px currentColor;">Seen: 1321</div>
<div class=t style="left:1541.45px;top:581.92px;font-size:11.8px;line-height:13.558px;color:#45a595;font-weight:400;transform:scaleX(0.9483);-webkit-text-stroke:0.5px #45a595;">Open Rate:</div>
<div class=t style="left:1541.46px;top:600.82px;font-size:11.8px;line-height:13.558px;color:#45a595;font-weight:400;transform:scaleX(0.9310);-webkit-text-stroke:0.5px #45a595;">83.24%</div>
<div class=t style="left:1674.32px;top:552.52px;font-size:15px;line-height:17.235px;color:#3b414e;font-weight:400;transform:scaleX(0.9194);-webkit-text-stroke:0.22px currentColor;">42.95</div>
<div class=t style="left:1744.52px;top:552.72px;font-size:15px;line-height:17.235px;color:#3b414e;font-weight:400;transform:scaleX(0.9039);-webkit-text-stroke:0.22px currentColor;">Finished</div>
<div class=t style="left:640.38px;top:696.22px;font-size:15px;line-height:17.235px;color:#3b414e;font-weight:400;transform:scaleX(0.8268);-webkit-text-stroke:0.22px currentColor;">702</div>
<div class=t style="left:689.99px;top:685.52px;font-size:15px;line-height:17.235px;color:#3b414e;font-weight:400;transform:scaleX(0.8097);-webkit-text-stroke:0.22px currentColor;">2025-03-31 21:58 (2</div>
<div class=t style="left:689.88px;top:707.52px;font-size:15px;line-height:17.235px;color:#3b414e;font-weight:400;transform:scaleX(0.7982);-webkit-text-stroke:0.22px currentColor;">months ago)</div>
<div class=t style="left:1058.70px;top:696.52px;font-size:15px;line-height:17.235px;color:#3b414e;font-weight:400;transform:scaleX(0.8856);-webkit-text-stroke:0.22px currentColor;">Viber</div>
<div class=t style="left:1152.80px;top:696.52px;font-size:15px;line-height:17.235px;color:#3b414e;font-weight:400;transform:scaleX(0.7950);-webkit-text-stroke:0.22px currentColor;">7758</div>
<div class=t style="left:1281.20px;top:696.52px;font-size:15px;line-height:17.235px;color:#3b414e;font-weight:400;transform:scaleX(0.7595);-webkit-text-stroke:0.22px currentColor;">183111</div>
<div class=t style="left:1421.00px;top:674.52px;font-size:15px;line-height:17.235px;color:#3b414e;font-weight:400;transform:scaleX(0.9167);-webkit-text-stroke:0.22px currentColor;">Amount:</div>
<div class=t style="left:1420.18px;top:696.52px;font-size:15px;line-height:17.235px;color:#3b414e;font-weight:400;transform:scaleX(0.7840);-webkit-text-stroke:0.22px currentColor;">17302.73</div>
<div class=t style="left:1420.49px;top:718.33px;font-size:15px;line-height:17.235px;color:#3b414e;font-weight:400;transform:scaleX(0.8438);-webkit-text-stroke:0.22px currentColor;">Orders: 412</div>
<div class=t style="left:1532.21px;top:650.92px;font-size:15px;line-height:17.235px;color:#3b414e;font-weight:400;transform:scaleX(0.9077);-webkit-text-stroke:0.22px currentColor;">Delivered (not</div>
<div class=t style="left:1533.05px;top:672.52px;font-size:15px;line-height:17.235px;color:#3b414e;font-weight:400;transform:scaleX(0.8357);-webkit-text-stroke:0.22px currentColor;">seen): 1049</div>
<div class=t style="left:1532.82px;top:694.52px;font-size:15px;line-height:17.235px;color:#3b414e;font-weight:400;transform:scaleX(0.7955);-webkit-text-stroke:0.22px currentColor;">Seen: 5976</div>
<div class=t style="left:1541.45px;top:724.72px;font-size:11.8px;line-height:13.558px;color:#45a595;font-weight:400;transform:scaleX(0.9483);-webkit-text-stroke:0.5px #45a595;">Open Rate:</div>
<div class=t style="left:1541.46px;top:743.62px;font-size:11.8px;line-height:13.558px;color:#45a595;font-weight:400;transform:scaleX(0.9310);-webkit-text-stroke:0.5px #45a595;">85.07%</div>
<div class=t style="left:1673.69px;top:695.33px;font-size:15px;line-height:17.235px;color:#3b414e;font-weight:400;transform:scaleX(0.8677);-webkit-text-stroke:0.22px currentColor;">193.95</div>
<div class=t style="left:1744.52px;top:695.52px;font-size:15px;line-height:17.235px;color:#3b414e;font-weight:400;transform:scaleX(0.9039);-webkit-text-stroke:0.22px currentColor;">Finished</div>
<div class=t style="left:640.38px;top:839.02px;font-size:15px;line-height:17.235px;color:#3b414e;font-weight:400;transform:scaleX(0.8268);-webkit-text-stroke:0.22px currentColor;">619</div>
<div class=t style="left:689.97px;top:828.33px;font-size:15px;line-height:17.235px;color:#3b414e;font-weight:400;transform:scaleX(0.8400);-webkit-text-stroke:0.22px currentColor;">2025-02-26 09:56 (3</div>
<div class=t style="left:689.88px;top:850.33px;font-size:15px;line-height:17.235px;color:#3b414e;font-weight:400;transform:scaleX(0.7982);-webkit-text-stroke:0.22px currentColor;">months ago)</div>
<div class=t style="left:1058.70px;top:839.33px;font-size:15px;line-height:17.235px;color:#3b414e;font-weight:400;transform:scaleX(0.8856);-webkit-text-stroke:0.22px currentColor;">Viber</div>
<div class=t style="left:1152.76px;top:839.33px;font-size:15px;line-height:17.235px;color:#3b414e;font-weight:400;transform:scaleX(0.8573);-webkit-text-stroke:0.22px currentColor;">6296</div>
<div class=t style="left:1281.20px;top:839.33px;font-size:15px;line-height:17.235px;color:#3b414e;font-weight:400;transform:scaleX(0.7595);-webkit-text-stroke:0.22px currentColor;">183111</div>
<div class=t style="left:1421.00px;top:817.33px;font-size:15px;line-height:17.235px;color:#3b414e;font-weight:400;transform:scaleX(0.9167);-webkit-text-stroke:0.22px currentColor;">Amount:</div>
<div class=t style="left:1420.16px;top:839.33px;font-size:15px;line-height:17.235px;color:#3b414e;font-weight:400;transform:scaleX(0.8027);-webkit-text-stroke:0.22px currentColor;">12315.66</div>
<div class=t style="left:1420.49px;top:861.12px;font-size:15px;line-height:17.235px;color:#3b414e;font-weight:400;transform:scaleX(0.8568);-webkit-text-stroke:0.22px currentColor;">Orders: 300</div>
<div class=t style="left:1532.21px;top:793.72px;font-size:15px;line-height:17.235px;color:#3b414e;font-weight:400;transform:scaleX(0.9077);-webkit-text-stroke:0.22px currentColor;">Delivered (not</div>
<div class=t style="left:1533.05px;top:815.33px;font-size:15px;line-height:17.235px;color:#3b414e;font-weight:400;transform:scaleX(0.8313);-webkit-text-stroke:0.22px currentColor;">seen): 1128</div>
<div class=t style="left:1532.82px;top:837.33px;font-size:15px;line-height:17.235px;color:#3b414e;font-weight:400;transform:scaleX(0.7970);-webkit-text-stroke:0.22px currentColor;">Seen: 4722</div>
<div class=t style="left:1541.45px;top:867.52px;font-size:11.8px;line-height:13.558px;color:#45a595;font-weight:400;transform:scaleX(0.9483);-webkit-text-stroke:0.5px #45a595;">Open Rate:</div>
<div class=t style="left:1541.46px;top:886.42px;font-size:11.8px;line-height:13.558px;color:#45a595;font-weight:400;transform:scaleX(0.9310);-webkit-text-stroke:0.5px #45a595;">80.72%</div>
<div class=t style="left:1673.72px;top:838.12px;font-size:15px;line-height:17.235px;color:#3b414e;font-weight:400;transform:scaleX(0.8419);-webkit-text-stroke:0.22px currentColor;">157.40</div>
<div class=t style="left:1744.52px;top:838.33px;font-size:15px;line-height:17.235px;color:#3b414e;font-weight:400;transform:scaleX(0.9039);-webkit-text-stroke:0.22px currentColor;">Finished</div>
<div class=t style="left:640.40px;top:981.83px;font-size:15px;line-height:17.235px;color:#3b414e;font-weight:400;transform:scaleX(0.7939);-webkit-text-stroke:0.22px currentColor;">617</div>
<div class=t style="left:689.98px;top:971.12px;font-size:15px;line-height:17.235px;color:#3b414e;font-weight:400;transform:scaleX(0.8291);-webkit-text-stroke:0.22px currentColor;">2025-02-24 16:04 (4</div>
<div class=t style="left:689.88px;top:993.12px;font-size:15px;line-height:17.235px;color:#3b414e;font-weight:400;transform:scaleX(0.7982);-webkit-text-stroke:0.22px currentColor;">months ago)</div>
<div class=t style="left:1058.70px;top:982.12px;font-size:15px;line-height:17.235px;color:#3b414e;font-weight:400;transform:scaleX(0.8856);-webkit-text-stroke:0.22px currentColor;">Viber</div>
<div class=t style="left:1152.77px;top:982.12px;font-size:15px;line-height:17.235px;color:#3b414e;font-weight:400;transform:scaleX(0.8366);-webkit-text-stroke:0.22px currentColor;">2388</div>
<div class=t style="left:1281.20px;top:982.12px;font-size:15px;line-height:17.235px;color:#3b414e;font-weight:400;transform:scaleX(0.7595);-webkit-text-stroke:0.22px currentColor;">183111</div>
<div class=t style="left:1421.00px;top:960.12px;font-size:15px;line-height:17.235px;color:#3b414e;font-weight:400;transform:scaleX(0.9167);-webkit-text-stroke:0.22px currentColor;">Amount:</div>
<div class=t style="left:1420.50px;top:982.12px;font-size:15px;line-height:17.235px;color:#3b414e;font-weight:400;transform:scaleX(0.8361);-webkit-text-stroke:0.22px currentColor;">5568.87</div>
<div class=t style="left:1420.50px;top:1003.92px;font-size:15px;line-height:17.235px;color:#3b414e;font-weight:400;transform:scaleX(0.8292);-webkit-text-stroke:0.22px currentColor;">Orders: 107</div>
<div class=t style="left:1532.21px;top:936.52px;font-size:15px;line-height:17.235px;color:#3b414e;font-weight:400;transform:scaleX(0.9077);-webkit-text-stroke:0.22px currentColor;">Delivered (not</div>
<div class=t style="left:1533.04px;top:958.12px;font-size:15px;line-height:17.235px;color:#3b414e;font-weight:400;transform:scaleX(0.8665);-webkit-text-stroke:0.22px currentColor;">seen): 330</div>
<div class=t style="left:1532.82px;top:980.12px;font-size:15px;line-height:17.235px;color:#3b414e;font-weight:400;transform:scaleX(0.7971);-webkit-text-stroke:0.22px currentColor;">Seen: 1549</div>
<div class=t style="left:1541.45px;top:1010.32px;font-size:11.8px;line-height:13.558px;color:#45a595;font-weight:400;transform:scaleX(0.9483);-webkit-text-stroke:0.5px #45a595;">Open Rate:</div>
<div class=t style="left:1541.46px;top:1029.22px;font-size:11.8px;line-height:13.558px;color:#45a595;font-weight:400;transform:scaleX(0.9310);-webkit-text-stroke:0.5px #45a595;">82.44%</div>
<div class=t style="left:1674.06px;top:980.92px;font-size:15px;line-height:17.235px;color:#3b414e;font-weight:400;transform:scaleX(0.8957);-webkit-text-stroke:0.22px currentColor;">59.70</div>
<div class=t style="left:1744.52px;top:981.12px;font-size:15px;line-height:17.235px;color:#3b414e;font-weight:400;transform:scaleX(0.9039);-webkit-text-stroke:0.22px currentColor;">Finished</div>
<div class=t style="left:640.37px;top:1124.62px;font-size:15px;line-height:17.235px;color:#3b414e;font-weight:400;transform:scaleX(0.8370);-webkit-text-stroke:0.22px currentColor;">610</div>
<div class=t style="left:689.98px;top:1113.92px;font-size:15px;line-height:17.235px;color:#3b414e;font-weight:400;transform:scaleX(0.8206);-webkit-text-stroke:0.22px currentColor;">2025-02-21 14:49 (4</div>
<div class=t style="left:689.88px;top:1135.92px;font-size:15px;line-height:17.235px;color:#3b414e;font-weight:400;transform:scaleX(0.7982);-webkit-text-stroke:0.22px currentColor;">months ago)</div>
<div class=t style="left:1058.70px;top:1124.92px;font-size:15px;line-height:17.235px;color:#3b414e;font-weight:400;transform:scaleX(0.8856);-webkit-text-stroke:0.22px currentColor;">Viber</div>
<div class=t style="left:1153.17px;top:1124.92px;font-size:15px;line-height:17.235px;color:#3b414e;font-weight:400;transform:scaleX(0.7790);-webkit-text-stroke:0.22px currentColor;">477</div>
<div class=t style="left:1281.20px;top:1124.92px;font-size:15px;line-height:17.235px;color:#3b414e;font-weight:400;transform:scaleX(0.7595);-webkit-text-stroke:0.22px currentColor;">183111</div>
<div class=t style="left:1421.00px;top:1102.92px;font-size:15px;line-height:17.235px;color:#3b414e;font-weight:400;transform:scaleX(0.9167);-webkit-text-stroke:0.22px currentColor;">Amount:</div>
<div class=t style="left:1420.44px;top:1124.92px;font-size:15px;line-height:17.235px;color:#3b414e;font-weight:400;transform:scaleX(0.7456);-webkit-text-stroke:0.22px currentColor;">744.11</div>
<div class=t style="left:1420.48px;top:1146.72px;font-size:15px;line-height:17.235px;color:#3b414e;font-weight:400;transform:scaleX(0.8612);-webkit-text-stroke:0.22px currentColor;">Orders: 21</div>
<div class=t style="left:1532.21px;top:1079.33px;font-size:15px;line-height:17.235px;color:#3b414e;font-weight:400;transform:scaleX(0.9077);-webkit-text-stroke:0.22px currentColor;">Delivered (not</div>
<div class=t style="left:1533.03px;top:1100.92px;font-size:15px;line-height:17.235px;color:#3b414e;font-weight:400;transform:scaleX(0.8892);-webkit-text-stroke:0.22px currentColor;">seen): 68</div>
<div class=t style="left:1532.82px;top:1122.92px;font-size:15px;line-height:17.235px;color:#3b414e;font-weight:400;transform:scaleX(0.8075);-webkit-text-stroke:0.22px currentColor;">Seen: 378</div>
<div class=t style="left:1541.45px;top:1153.12px;font-size:11.8px;line-height:13.558px;color:#45a595;font-weight:400;transform:scaleX(0.9483);-webkit-text-stroke:0.5px #45a595;">Open Rate:</div>
<div class=t style="left:1541.46px;top:1172.02px;font-size:11.8px;line-height:13.558px;color:#45a595;font-weight:400;transform:scaleX(0.9310);-webkit-text-stroke:0.5px #45a595;">84.75%</div>
<div class=t style="left:1673.79px;top:1123.72px;font-size:15px;line-height:17.235px;color:#3b414e;font-weight:400;transform:scaleX(0.7694);-webkit-text-stroke:0.22px currentColor;">11.93</div>
<div class=t style="left:1744.52px;top:1123.92px;font-size:15px;line-height:17.235px;color:#3b414e;font-weight:400;transform:scaleX(0.9039);-webkit-text-stroke:0.22px currentColor;">Finished</div>
<div class=t style="left:640.38px;top:1267.42px;font-size:15px;line-height:17.235px;color:#3b414e;font-weight:400;transform:scaleX(0.8333);-webkit-text-stroke:0.22px currentColor;">611</div>
<div class=t style="left:689.99px;top:1256.73px;font-size:15px;line-height:17.235px;color:#3b414e;font-weight:400;transform:scaleX(0.8104);-webkit-text-stroke:0.22px currentColor;">2025-02-21 13:11 (4</div>
<div class=t style="left:689.88px;top:1278.73px;font-size:15px;line-height:17.235px;color:#3b414e;font-weight:400;transform:scaleX(0.7982);-webkit-text-stroke:0.22px currentColor;">months ago)</div>
<div class=t style="left:1058.70px;top:1267.73px;font-size:15px;line-height:17.235px;color:#3b414e;font-weight:400;transform:scaleX(0.8856);-webkit-text-stroke:0.22px currentColor;">Viber</div>
<div class=t style="left:1152.80px;top:1267.73px;font-size:15px;line-height:17.235px;color:#3b414e;font-weight:400;transform:scaleX(0.8048);-webkit-text-stroke:0.22px currentColor;">2631</div>
<div class=t style="left:1281.20px;top:1267.73px;font-size:15px;line-height:17.235px;color:#3b414e;font-weight:400;transform:scaleX(0.7595);-webkit-text-stroke:0.22px currentColor;">183111</div>
<div class=t style="left:1421.00px;top:1245.73px;font-size:15px;line-height:17.235px;color:#3b414e;font-weight:400;transform:scaleX(0.9167);-webkit-text-stroke:0.22px currentColor;">Amount:</div>
<div class=t style="left:1420.39px;top:1267.73px;font-size:15px;line-height:17.235px;color:#3b414e;font-weight:400;transform:scaleX(0.8145);-webkit-text-stroke:0.22px currentColor;">7851.48</div>
<div class=t style="left:1420.49px;top:1289.53px;font-size:15px;line-height:17.235px;color:#3b414e;font-weight:400;transform:scaleX(0.8422);-webkit-text-stroke:0.22px currentColor;">Orders: 215</div>
<div class=t style="left:1532.21px;top:1222.12px;font-size:15px;line-height:17.235px;color:#3b414e;font-weight:400;transform:scaleX(0.9077);-webkit-text-stroke:0.22px currentColor;">Delivered (not</div>
<div class=t style="left:1533.04px;top:1243.73px;font-size:15px;line-height:17.235px;color:#3b414e;font-weight:400;transform:scaleX(0.8520);-webkit-text-stroke:0.22px currentColor;">seen): 387</div>
<div class=t style="left:1532.81px;top:1265.73px;font-size:15px;line-height:17.235px;color:#3b414e;font-weight:400;transform:scaleX(0.8106);-webkit-text-stroke:0.22px currentColor;">Seen: 2033</div>
<div class=t style="left:1541.45px;top:1295.92px;font-size:11.8px;line-height:13.558px;color:#45a595;font-weight:400;transform:scaleX(0.9483);-webkit-text-stroke:0.5px #45a595;">Open Rate:</div>
<div class=t style="left:1541.46px;top:1314.82px;font-size:11.8px;line-height:13.558px;color:#45a595;font-weight:400;transform:scaleX(0.9310);-webkit-text-stroke:0.5px #45a595;">84.01%</div>
<div class=t style="left:1673.93px;top:1266.53px;font-size:15px;line-height:17.235px;color:#3b414e;font-weight:400;transform:scaleX(0.8994);-webkit-text-stroke:0.22px currentColor;">65.78</div>
<div class=t style="left:1744.52px;top:1266.73px;font-size:15px;line-height:17.235px;color:#3b414e;font-weight:400;transform:scaleX(0.9039);-webkit-text-stroke:0.22px currentColor;">Finished</div>
<div class=t style="left:1532.21px;top:1366.13px;font-size:15px;line-height:17.235px;color:#3b414e;font-weight:400;transform:scaleX(0.9077);-webkit-text-stroke:0.22px currentColor;">Delivered (not</div>
</body></html>
